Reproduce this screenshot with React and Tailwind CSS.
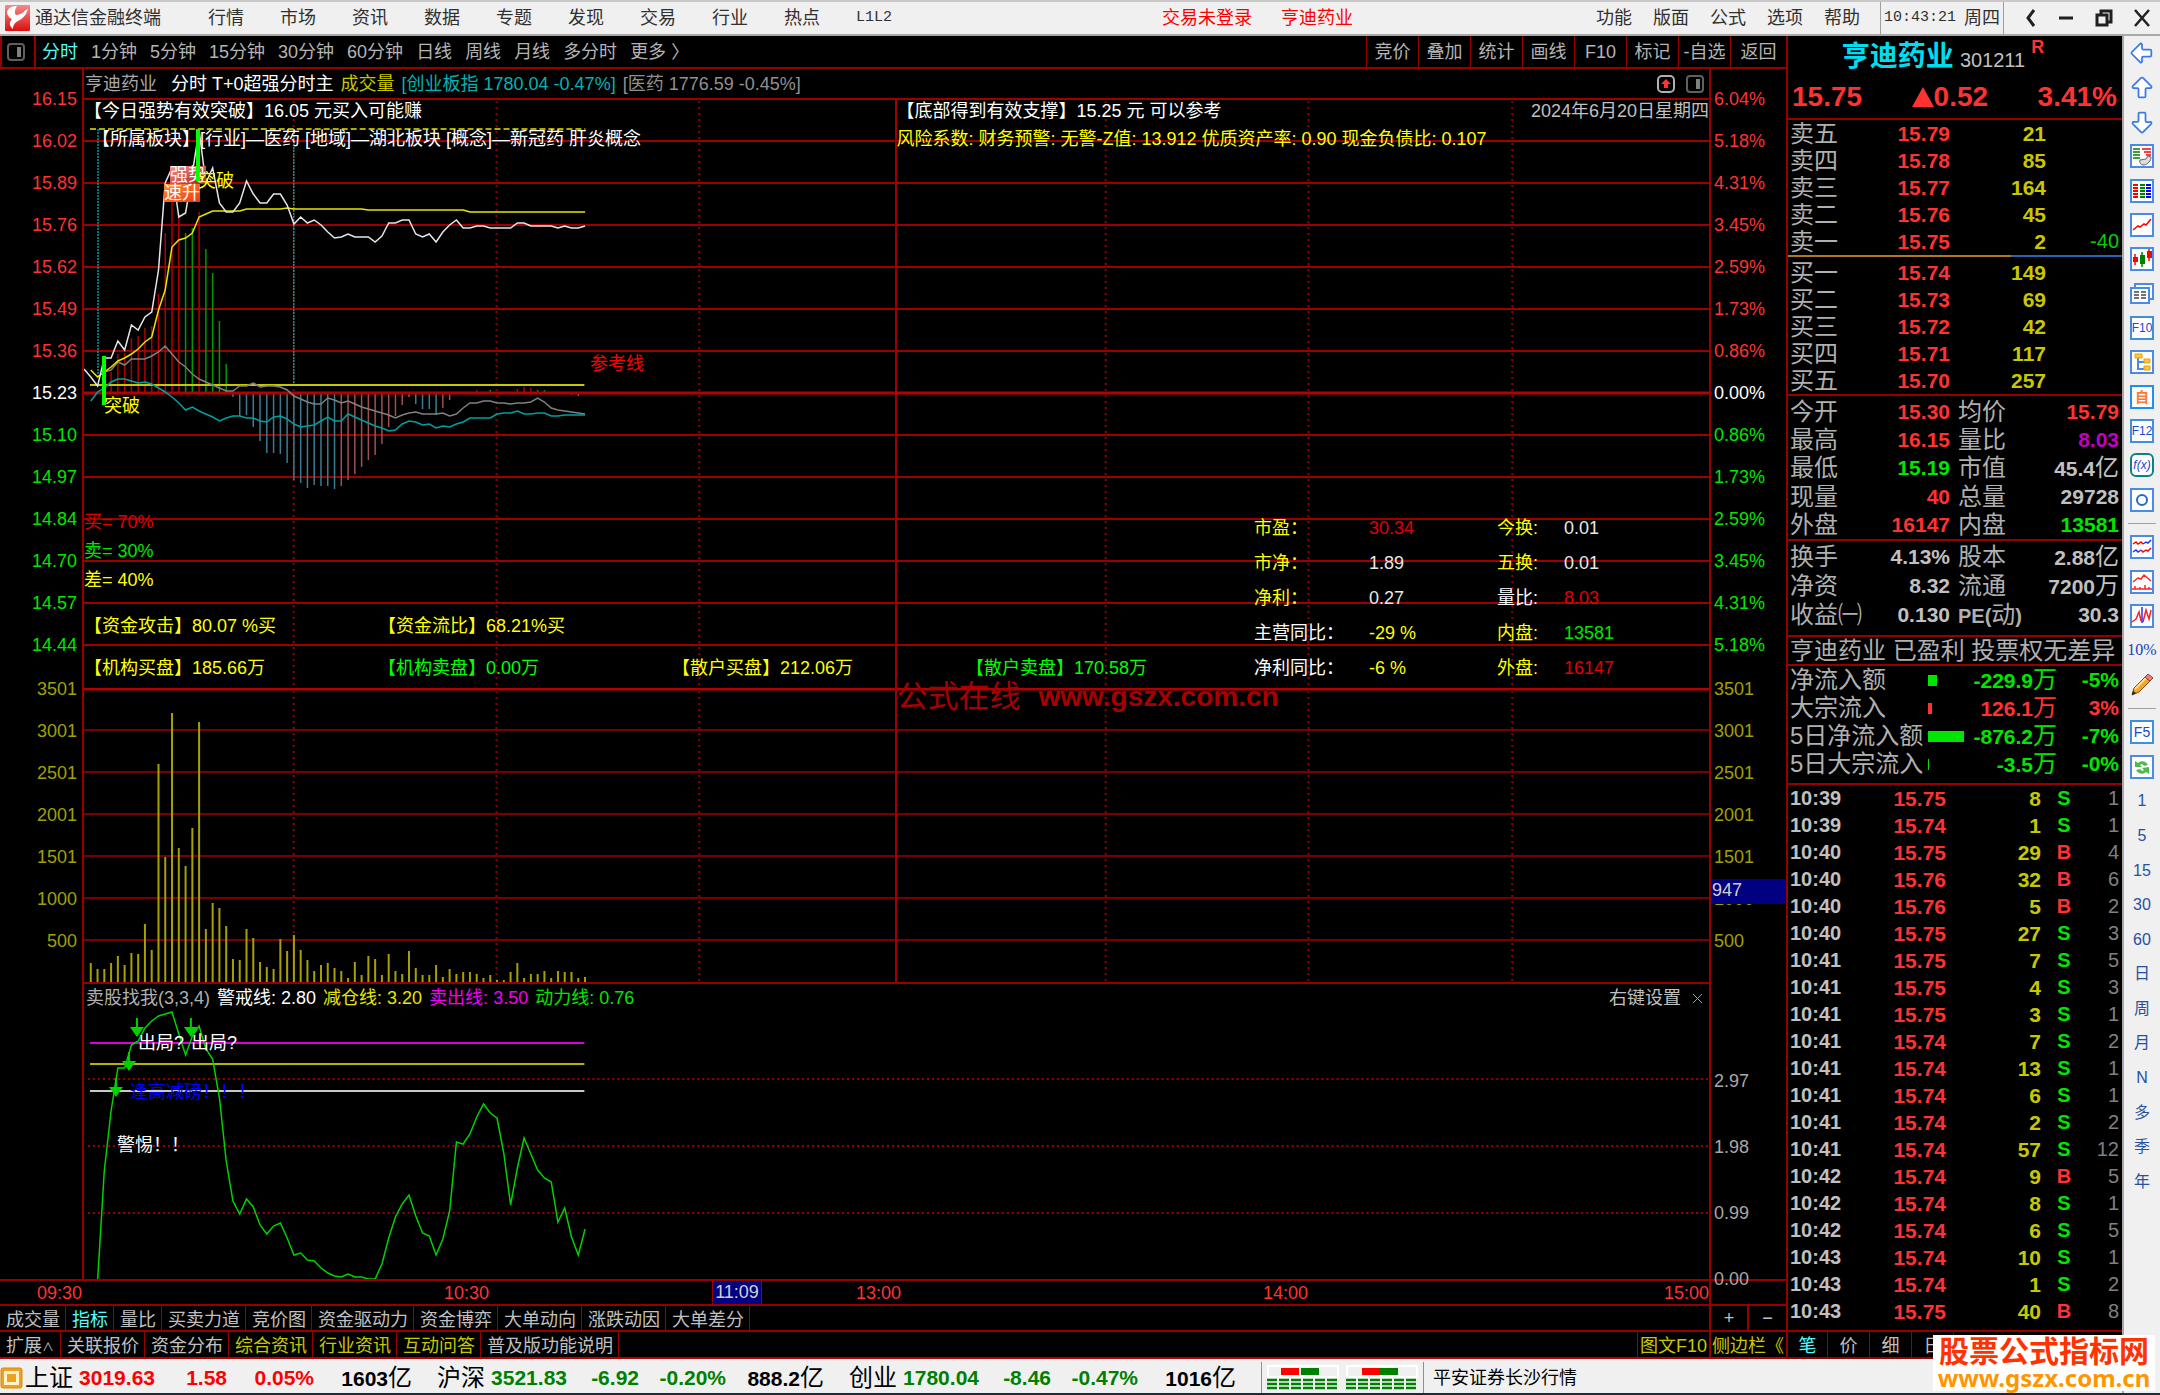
import { ArrowBigDown, ArrowBigLeft, ArrowBigUp } from 'lucide-react';

const MENU = ['行情', '市场', '资讯', '数据', '专题', '发现', '交易', '行业', '热点'];
const MENU_RIGHT = ['功能', '版面', '公式', '选项', '帮助'];
const PERIODS = ['分时', '1分钟', '5分钟', '15分钟', '30分钟', '60分钟', '日线', '周线', '月线', '多分时', '更多 〉'];
const TOOLS = ['竞价', '叠加', '统计', '画线', 'F10', '标记', '-自选', '返回'];
const IND_TABS = ['成交量', '指标', '量比', '买卖力道', '竞价图', '资金驱动力', '资金博弈', '大单动向', '涨跌动因', '大单差分'];
const INFO_TABS = [
  { t: '关联报价' },
  { t: '资金分布' },
  { t: '综合资讯', hot: true },
  { t: '行业资讯', hot: true },
  { t: '互动问答', hot: true },
  { t: '普及版功能说明' },
];

const PRICE_AXIS = ['16.15', '16.02', '15.89', '15.76', '15.62', '15.49', '15.36', '15.23', '15.10', '14.97', '14.84', '14.70', '14.57', '14.44'];
const PCT_AXIS = ['6.04%', '5.18%', '4.31%', '3.45%', '2.59%', '1.73%', '0.86%', '0.00%', '0.86%', '1.73%', '2.59%', '3.45%', '4.31%', '5.18%'];
const VOL_AXIS = ['3501', '3001', '2501', '2001', '1501', '1000', '500'];
const IND_AXIS = ['2.97', '1.98', '0.99', '0.00'];

// one sample per minute, 240 minutes over the chart width
const W = 1627;
const STEP = W / 240;
const toPoints = (ys, start = 0) => ys.map((y, i) => `${((i + start) * STEP).toFixed(1)},${y}`).join(' ');

const PRICE = [271, 279, 288, 260, 260, 243, 252, 227, 232, 219, 214, 172, 85, 70, 119, 115, 75, 32, 85, 70, 105, 114, 114, 105, 83, 96, 105, 105, 96, 96, 107, 126, 119, 125, 122, 127, 134, 140, 139, 136, 139, 139, 139, 144, 138, 125, 125, 122, 122, 136, 139, 136, 144, 134, 127, 122, 130, 130, 128, 128, 130, 130, 130, 130, 125, 125, 128, 128, 128, 128, 130, 128, 130, 130, 128];
const AVG = [272, 279, 274, 269, 263, 260, 256, 251, 244, 239, 212, 192, 149, 142, 140, 135, 119, 116, 113, 113, 113, 113, 113, 111, 111, 111, 111, 111, 111, 110, 111, 111, 111, 111, 111, 111, 111, 111, 111, 111, 111, 112, 112, 112, 112, 112, 112, 112, 112, 112, 112, 112, 112, 112, 112, 112, 114, 114, 114, 114, 114, 114, 114, 114, 114, 114, 114, 114, 114, 114, 114, 114, 114, 114];
const GRAY = [274, 272, 264, 267, 261, 261, 261, 258, 254, 248, 256, 264, 269, 276, 281, 284, 287, 290, 293, 293, 288, 288, 285, 289, 288, 288, 289, 292, 298, 301, 304, 306, 306, 300, 302, 305, 303, 306, 309, 311, 313, 315, 317, 320, 317, 315, 314, 316, 316, 316, 315, 318, 316, 310, 305, 305, 303, 303, 305, 305, 306, 305, 305, 304, 300, 304, 310, 312, 313, 314, 315, 316];
const CYAN = [303, 294, 290, 284, 281, 281, 283, 285, 284, 286, 290, 294, 299, 305, 312, 309, 313, 316, 319, 323, 320, 318, 318, 320, 320, 323, 324, 319, 318, 321, 326, 329, 328, 327, 323, 319, 323, 323, 316, 319, 322, 325, 328, 330, 333, 332, 326, 323, 324, 327, 326, 330, 328, 329, 326, 324, 320, 320, 320, 320, 316, 315, 315, 313, 316, 316, 315, 315, 318, 318, 317, 317, 317, 317];

const R = '#b40000';
const G = '#009a00';
const T = '#3c7c90';
const P = '#a05050';
const MACD = [
  [4, 274, R], [5, 256, R], [6, 255, R], [7, 240, R], [8, 238, R], [9, 230, R], [10, 228, R], [11, 196, R], [12, 135, R], [13, 104, R], [14, 115, R],
  [15, 135, G], [16, 130, G], [17, 114, R], [18, 151, G], [19, 175, G], [20, 223, G], [21, 266, G],
  [22, 299, T], [23, 318, T], [24, 317, T], [25, 329, T], [26, 343, T], [27, 355, T], [28, 355, T], [29, 356, T], [30, 365, T], [31, 382, T], [32, 385, T], [33, 390, T], [34, 387, T], [35, 388, T], [36, 388, T], [37, 391, T],
  [38, 388, P], [39, 382, P], [40, 376, P], [41, 369, P], [42, 362, P], [43, 357, P], [44, 346, P], [45, 329, P], [46, 318, P], [47, 307, P], [48, 299, P],
  [49, 306, T], [50, 311, T], [51, 311, T], [52, 317, T], [53, 310, P], [54, 302, P],
  [58, 292, R], [60, 292, G], [64, 291, R], [65, 289, R], [66, 290, R], [67, 292, G], [68, 292, G], [72, 297, T], [73, 298, T],
];

const VOLUME = [275, 281, 281, 275, 268, 277, 265, 266, 236, 262, 76, 169, 25, 160, 178, 140, 34, 241, 215, 220, 238, 271, 272, 241, 250, 274, 279, 281, 251, 263, 247, 262, 272, 283, 277, 275, 280, 283, 290, 274, 287, 268, 271, 287, 266, 283, 286, 263, 280, 287, 287, 277, 289, 281, 286, 284, 284, 286, 290, 287, 292, 292, 284, 275, 290, 286, 286, 283, 290, 283, 284, 284, 290, 289];

const POWER = [297, 187, 127, 84, 84, 61, 57, 44, 37, 32, 30, 28, 50, 71, 52, 42, 65, 75, 114, 177, 217, 230, 215, 223, 241, 250, 242, 239, 254, 271, 269, 276, 277, 284, 289, 292, 293, 290, 293, 293, 295, 295, 280, 254, 233, 220, 211, 232, 249, 252, 271, 255, 227, 158, 160, 150, 133, 120, 129, 134, 169, 221, 184, 154, 170, 186, 194, 198, 238, 224, 253, 271, 245];
const ARROWS = [[53, 53], [107, 53], [45, 87], [32, 113]];

const ASKS = [['卖五', '15.79', '21'], ['卖四', '15.78', '85'], ['卖三', '15.77', '164'], ['卖二', '15.76', '45'], ['卖一', '15.75', '2', '-40']];
const BIDS = [['买一', '15.74', '149'], ['买二', '15.73', '69'], ['买三', '15.72', '42'], ['买四', '15.71', '117'], ['买五', '15.70', '257']];

const RED = 'text-[#ff3232]';
const GREEN = 'text-[#00e600]';
const GRAY_T = 'text-[#c0c0c0]';
const STATS_A = [
  ['今开', '15.30', RED, '均价', '15.79', '', RED],
  ['最高', '16.15', RED, '量比', '8.03', '', 'text-[#c000c0]'],
  ['最低', '15.19', GREEN, '市值', '45.4', '亿', GRAY_T],
  ['现量', '40', RED, '总量', '29728', '', GRAY_T],
  ['外盘', '16147', RED, '内盘', '13581', '', GREEN],
];
const STATS_B = [
  ['换手', '4.13%', GRAY_T, '股本', '2.88', '亿', GRAY_T],
  ['净资', '8.32', GRAY_T, '流通', '7200', '万', GRAY_T],
  ['收益㈠', '0.130', GRAY_T, 'PE(动)', '30.3', '', GRAY_T],
];
const FLOWS = [
  { l: '净流入额', v: '-229.9', p: '-5%', w: 9, c: GREEN },
  { l: '大宗流入', v: '126.1', p: '3%', w: 4, c: RED },
  { l: '5日净流入额', v: '-876.2', p: '-7%', w: 36, c: GREEN },
  { l: '5日大宗流入', v: '-3.5', p: '-0%', w: 1, c: GREEN },
];
const TICKS = [
  ['10:39', '15.75', 8, 'S', 1], ['10:39', '15.74', 1, 'S', 1], ['10:40', '15.75', 29, 'B', 4], ['10:40', '15.76', 32, 'B', 6],
  ['10:40', '15.76', 5, 'B', 2], ['10:40', '15.75', 27, 'S', 3], ['10:41', '15.75', 7, 'S', 5], ['10:41', '15.75', 4, 'S', 3],
  ['10:41', '15.75', 3, 'S', 1], ['10:41', '15.74', 7, 'S', 2], ['10:41', '15.74', 13, 'S', 1], ['10:41', '15.74', 6, 'S', 1],
  ['10:41', '15.74', 2, 'S', 2], ['10:41', '15.74', 57, 'S', 12], ['10:42', '15.74', 9, 'B', 5], ['10:42', '15.74', 8, 'S', 1],
  ['10:42', '15.74', 6, 'S', 5], ['10:43', '15.74', 10, 'S', 1], ['10:43', '15.74', 1, 'S', 2], ['10:43', '15.75', 40, 'B', 8],
];

const FUNDAMENTALS = [
  ['市盈：', 'text-[#ff0]', '30.34', 'text-[#e00000]', '今换:', 'text-[#ff0]', '0.01', 'text-[#e8e8e8]'],
  ['市净：', 'text-[#ff0]', '1.89', 'text-[#e8e8e8]', '五换:', 'text-[#ff0]', '0.01', 'text-[#e8e8e8]'],
  ['净利：', 'text-[#ff0]', '0.27', 'text-[#e8e8e8]', '量比:', 'text-white', '8.03', 'text-[#e00000]'],
  ['主营同比：', 'text-white', '-29 %', 'text-[#ff0]', '内盘:', 'text-[#ff0]', '13581', 'text-[#00e600]'],
  ['净利同比：', 'text-white', '-6 %', 'text-[#ff0]', '外盘:', 'text-[#ff0]', '16147', 'text-[#e00000]'],
];

const INDEXES = [
  { n: '上证', v: '3019.63', d: '1.58', p: '0.05%', a: '1603', c: 'text-[#ff0000]' },
  { n: '沪深', v: '3521.83', d: '-6.92', p: '-0.20%', a: '888.2', c: 'text-[#008000]' },
  { n: '创业', v: '1780.04', d: '-8.46', p: '-0.47%', a: '1016', c: 'text-[#008000]' },
];

function TopBar() {
  return (
    <header className="flex h-9 items-center border-t-2 border-b-2 border-t-[#c8c8c8] border-b-[#a8a8a8] bg-[#f0f0f0] text-lg text-[#303030]">
      <svg className="ml-[5px] h-[26px] w-[25px]" viewBox="0 0 25 26">
        <defs>
          <linearGradient id="logo" x1="0" y1="0" x2="0" y2="1">
            <stop offset="0" stopColor="#f58a8a" />
            <stop offset="1" stopColor="#dc0f0f" />
          </linearGradient>
        </defs>
        <rect width="25" height="26" rx="1" fill="url(#logo)" />
        <path d="M2 7C3 3 7 1 12 1c-2 3-3 7-1 9 5 0 9-4 12-7-1 6-5 11-10 13-4 2-5 5-5 8-4-3-4-7-1-10-3-1-5-4-5-7z" fill="#fff" />
      </svg>
      <h1 className="ml-[5px] w-[126px] whitespace-nowrap">通达信金融终端</h1>
      <nav className="ml-[47px] flex items-center gap-9">
        {MENU.map((m) => (
          <button key={m} type="button">{m}</button>
        ))}
        <button type="button" className="font-['Liberation_Mono',monospace] text-[15px]">L1L2</button>
      </nav>
      <div className="ml-auto flex gap-[29px] text-[#ff0000]">
        <button type="button">交易未登录</button>
        <button type="button">亨迪药业</button>
      </div>
      <nav className="ml-[243px] flex gap-[21px]">
        {MENU_RIGHT.map((m) => (
          <button key={m} type="button">{m}</button>
        ))}
      </nav>
      <div className="ml-5 flex h-full items-center gap-2 border-x border-[#a0a0a0] px-[3px]">
        <time className="font-['Liberation_Mono',monospace] text-[15px]">10:43:21</time>
        <span>周四</span>
      </div>
      <div className="flex w-[156px] items-center justify-between pr-[10px] pl-5">
        <button type="button" aria-label="后退">
          <svg className="h-5 w-[14px]" viewBox="0 0 14 20"><path d="M10 2L4 10l6 8" fill="none" stroke="#202020" strokeWidth="3" /></svg>
        </button>
        <button type="button" aria-label="最小化">
          <svg className="h-5 w-[14px]" viewBox="0 0 14 20"><path d="M0 10h14" stroke="#202020" strokeWidth="3" /></svg>
        </button>
        <button type="button" aria-label="还原">
          <svg className="h-5 w-[18px]" viewBox="0 0 18 20"><path d="M2 7h10v10H2zM6 7V3h10v11h-4" fill="none" stroke="#202020" strokeWidth="3" /></svg>
        </button>
        <button type="button" aria-label="关闭">
          <svg className="h-5 w-4" viewBox="0 0 16 20"><path d="M1 2l14 16M15 2L1 18" stroke="#202020" strokeWidth="2.5" /></svg>
        </button>
      </div>
    </header>
  );
}

function PanelIcon({ className }) {
  return (
    <svg className={className} viewBox="0 0 18 18">
      <rect x="1" y="1" width="16" height="16" rx="3" fill="none" stroke="#606060" strokeWidth="2" />
      <rect x="10" y="4" width="4" height="10" fill="#808080" />
    </svg>
  );
}

function PeriodBar() {
  return (
    <div className="flex h-[33px] border-b-2 border-[#960000] text-lg text-[#b4b4b4]">
      <button type="button" aria-label="布局" className="flex w-9 items-center justify-center border-r-2 border-l-2 border-[#960000] pr-1">
        <PanelIcon className="h-[18px] w-[18px]" />
      </button>
      <nav className="ml-[6px] flex items-center gap-[13px]">
        {PERIODS.map((p, i) => (
          <button key={p} type="button" className={i === 0 ? 'text-[#54fcfc]' : ''}>{p}</button>
        ))}
      </nav>
      <div className="ml-auto flex">
        {TOOLS.map((t) => (
          <button key={t} type="button" className="w-[52px] border-l border-[#960000] text-center last:w-[56px]">{t}</button>
        ))}
      </div>
    </div>
  );
}

const axisColor = (i) => {
  if (i < 7) return 'text-[#ff3232]';
  return i === 7 ? 'text-white' : 'text-[#00e600]';
};

function Axis({ labels, side }) {
  return (
    <div className={side === 'left' ? 'w-[82px] shrink-0 pt-[9px] pr-[5px] text-right' : 'relative w-[77px] shrink-0 border-l-2 border-[#960000] pt-[9px] pl-[3px]'}>
      {labels.map((l, i) => (
        <div key={i} className={`h-[42px] leading-[42px] ${axisColor(i)}`}>{l}</div>
      ))}
      <div className="pt-[2px] text-[#a0a000]">
        {VOL_AXIS.map((l) => (
          <div key={l} className="h-[42px] leading-[42px]">{l}</div>
        ))}
      </div>
      {side === 'right' && (
        <>
          <div className="h-0 pt-[86px] text-[#a8a8a8]">
            {IND_AXIS.map((l) => (
              <div key={l} className="h-[66px] leading-[66px]">{l}</div>
            ))}
          </div>
          <div className="absolute inset-x-0 top-[810px] h-[25px] bg-[#000080] pl-[1px] leading-[22px] text-[#d0d0d0]">947</div>
        </>
      )}
    </div>
  );
}

function VerticalGrid({ height }) {
  return (
    <g stroke="#a00000" strokeWidth="2">
      {[210, 413, 616, 1023, 1226, 1430].map((x) => (
        <line key={x} x1={x} x2={x} y1="3" y2={height} strokeDasharray="2 4" stroke="#8c0000" />
      ))}
      <line x1="813" x2="813" y1="0" y2={height} />
    </g>
  );
}

function PricePane() {
  return (
    <div className="relative h-[590px] whitespace-nowrap">
      <svg className="block h-full w-full" viewBox={`0 0 ${W} 590`} preserveAspectRatio="none">
        <g stroke="#9c0000" strokeWidth="2">
          {PRICE_AXIS.map((p, i) => (
            <line key={p} x1="0" x2={W} y1={i * 42 + 1} y2={i * 42 + 1} />
          ))}
        </g>
        <VerticalGrid height={590} />
        {MACD.map(([i, y, c]) => (
          <line key={i} x1={i * STEP} x2={i * STEP} y1="294" y2={y} stroke={c} strokeWidth="1.5" />
        ))}
        <line x1="0" x2={W} y1="295" y2="295" stroke="#b40000" strokeWidth="3" />
        <line x1="6" x2="502" y1="31" y2="31" stroke="#e6e600" strokeDasharray="6 3" strokeWidth="1.5" />
        <path d="M14 31V279M210 31V288" stroke="#009a9a" strokeDasharray="2 1" strokeWidth="1.5" />
        <line x1="6" x2="501" y1="287" y2="287" stroke="#c8c800" strokeWidth="2" />
        <g fill="none" strokeWidth="1.5">
          <polyline points={toPoints(GRAY, 3)} stroke="#808080" />
          <polyline points={toPoints(CYAN, 1)} stroke="#00a0a0" />
          <polyline points={toPoints(AVG, 1)} stroke="#e6e600" />
          <polyline points={toPoints(PRICE)} stroke="#e6e6e6" />
        </g>
      </svg>

      <div className="absolute top-0 left-0 leading-[27px] text-white">【今日强势有效突破】16.05 元买入可能赚</div>
      <div className="absolute top-7 left-2 leading-[27px] text-white">【所属板块】[行业]—医药 [地域]—湖北板块 [概念]—新冠药 肝炎概念</div>
      <div className="absolute top-0 left-1/2 leading-[27px] text-white">【底部得到有效支撑】15.25 元 可以参考</div>
      <div className="absolute top-7 left-1/2 leading-[27px] text-[#ff0]">风险系数: 财务预警: 无警-Z值: 13.912 优质资产率: 0.90 现金负债比: 0.107</div>
      <div className="absolute top-0 right-0 leading-[27px] text-[#c0c0c0]">2024年6月20日星期四</div>

      <span className="absolute top-[68px] left-[86px] h-[18px] bg-gradient-to-br from-[#ff9090] to-[#a01818] leading-[18px] text-white">强势</span>
      <span className="absolute top-[86px] left-[80px] h-[18px] bg-gradient-to-br from-[#ff8a30] to-[#f03010] leading-[18px] text-white">速升</span>
      <span className="absolute top-[31px] left-[112px] h-[52px] w-1 bg-[#00ff00]" />
      <span className="absolute top-[258px] left-[18px] h-[49px] w-1 bg-[#00ff00]" />
      <span className="absolute top-[70px] left-[114px] leading-[27px] text-[#ff0]">突破</span>
      <span className="absolute top-[295px] left-[20px] leading-[27px] text-[#ff0]">突破</span>
      <span className="absolute top-[253px] left-[506px] leading-[27px] text-[#ff0000]">参考线</span>

      <div className="absolute top-[410px] left-0 leading-[29px]">
        <div className="text-[#e00000]">买= 70%</div>
        <div className="text-[#00e600]">卖= 30%</div>
        <div className="text-[#ff0]">差= 40%</div>
      </div>
      <div className="absolute top-[507px] left-0 grid grid-cols-[294px_294px_294px_294px] leading-[42px] text-[#ff0]">
        <span>【资金攻击】80.07 %买</span>
        <span className="col-span-3">【资金流比】68.21%买</span>
        <span>【机构买盘】185.66万</span>
        <span className="text-[#00ff00]">【机构卖盘】0.00万</span>
        <span>【散户买盘】212.06万</span>
        <span className="text-[#00ff00]">【散户卖盘】170.58万</span>
      </div>

      <table className="absolute top-[412px] right-[75px] border-collapse text-left">
        <tbody>
          {FUNDAMENTALS.map(([l1, c1, v1, d1, l2, c2, v2, d2]) => (
            <tr key={l1} className="h-[35px]">
              <th scope="row" className={`w-[115px] p-0 font-normal ${c1}`}>{l1}</th>
              <td className={`w-[128px] p-0 ${d1}`}>{v1}</td>
              <th scope="row" className={`w-[67px] p-0 font-normal ${c2}`}>{l2}</th>
              <td className={`w-[70px] p-0 ${d2}`}>{v2}</td>
            </tr>
          ))}
        </tbody>
      </table>
    </div>
  );
}

function VolumePane() {
  return (
    <div className="relative h-[296px] border-b-2 border-[#960000]">
      <svg className="block h-full w-full" viewBox={`0 0 ${W} 294`} preserveAspectRatio="none">
        <line x1="0" x2={W} y1="1" y2="1" stroke="#b40000" strokeWidth="3" />
        <g stroke="#780000" strokeWidth="2">
          {[42, 84, 126, 168, 210, 252].map((y) => (
            <line key={y} x1="0" x2={W} y1={y} y2={y} />
          ))}
        </g>
        <VerticalGrid height={294} />
        {VOLUME.map((y, i) => (
          <line key={i} x1={(i + 1) * STEP} x2={(i + 1) * STEP} y1="294" y2={y} stroke="#a8a000" strokeWidth="2" />
        ))}
      </svg>
      <div className="absolute -top-[5px] left-1/2 flex gap-[18px] whitespace-nowrap text-[#a80000]">
        <span className="text-[31px] leading-7">公式在线</span>
        <span className="text-[28px] leading-7 font-bold">www.gszx.com.cn</span>
      </div>
    </div>
  );
}

function IndicatorPane() {
  return (
    <div className="relative h-[295px] whitespace-nowrap">
      <svg className="block h-full w-full" viewBox={`0 0 ${W} 295`} preserveAspectRatio="none">
        <g stroke="#960000" strokeWidth="2" strokeDasharray="2 3">
          <path d={`M4 95H${W}M4 162H${W}M4 229H${W}`} />
        </g>
        <line x1="6" x2="501" y1="59" y2="59" stroke="#d800d8" strokeWidth="2" />
        <line x1="6" x2="501" y1="80" y2="80" stroke="#b4b400" strokeWidth="2" />
        <line x1="6" x2="501" y1="107" y2="107" stroke="#c8c8c8" strokeWidth="2" />
        <polyline points={toPoints(POWER, 2)} fill="none" stroke="#00d200" strokeWidth="1.5" />
        {ARROWS.map(([x, y]) => (
          <path key={`${x}-${y}`} d={`M${x - 1} ${y - 19}h2v9h6l-7 10l-7 -10h6z`} fill="#00d200" />
        ))}
      </svg>
      <div className="absolute top-0 left-[2px] flex gap-[7px] leading-7">
        <span className="text-[#b0b0b0]">卖股找我(3,3,4)</span>
        <span className="text-white">警戒线: 2.80</span>
        <span className="text-[#e6e600]">减仓线: 3.20</span>
        <span className="text-[#f000f0]">卖出线: 3.50</span>
        <span className="text-[#00e600]">动力线: 0.76</span>
      </div>
      <div className="absolute top-0 right-[6px] flex items-center gap-[11px] leading-7 text-[#c0c0c0]">
        <button type="button">右键设置</button>
        <button type="button" aria-label="关闭指标">
          <svg className="h-[11px] w-[11px]" viewBox="0 0 11 11"><path d="M1 1l9 9M10 1l-9 9" stroke="#a0a0a0" /></svg>
        </button>
      </div>
      <span className="absolute top-[45px] left-[54px] leading-7 text-white">出局?</span>
      <span className="absolute top-[45px] left-[107px] leading-7 text-white">出局?</span>
      <span className="absolute top-[94px] left-[46px] leading-7 text-[#0000ff]">逢高减磅！！！</span>
      <span className="absolute top-[147px] left-[33px] leading-7 text-white">警惕！！</span>
    </div>
  );
}

function ChartArea() {
  return (
    <div className="flex h-[1210px]">
      <Axis labels={PRICE_AXIS} side="left" />
      <div className="min-w-0 flex-1 border-l-2 border-[#960000]">
        <div className="flex h-[29px] items-center gap-[7px] whitespace-nowrap">
          <h2 className="mr-[7px] ml-[1px] text-[#a8a8a8]">亨迪药业</h2>
          <span className="text-white">分时 T+0超强分时主</span>
          <span className="text-[#c8c800]">成交量</span>
          <span className="text-[#00b4b4]">[创业板指 1780.04 -0.47%]</span>
          <span className="text-[#909090]">[医药 1776.59 -0.45%]</span>
          <button type="button" aria-label="置顶" className="ml-auto">
            <svg className="h-[18px] w-[18px]" viewBox="0 0 18 18">
              <rect x="1" y="1" width="16" height="16" rx="4" fill="none" stroke="#b0b0b0" strokeWidth="2" />
              <path d="M9 4l5 5h-3v4H7V9H4z" fill="#ff3232" />
            </svg>
          </button>
          <button type="button" aria-label="侧栏" className="mr-[5px] ml-1">
            <PanelIcon className="h-[18px] w-[18px]" />
          </button>
        </div>
        <PricePane />
        <VolumePane />
        <IndicatorPane />
      </div>
      <Axis labels={PCT_AXIS} side="right" />
    </div>
  );
}

function TimeAxis() {
  return (
    <div className="flex h-[27px] border-y-2 border-[#960000] leading-6 text-[#ff3232]">
      <div className="w-[82px] text-right">09:30</div>
      <div className="relative grid flex-1 grid-cols-[407fr_412fr_407fr_401fr] text-right">
        <span>10:30</span>
        <span>13:00</span>
        <span>14:00</span>
        <span>15:00</span>
        <div className="absolute inset-y-0 left-[630px] w-[50px] border-x border-[#960000] bg-[#000080] text-center leading-[22px] text-[#d0d0d0]">11:09</div>
      </div>
      <div className="w-[77px] border-l-2 border-[#960000]" />
    </div>
  );
}

function BottomTabs() {
  return (
    <div className="leading-5 text-[#c0c0c0]">
      <div className="flex h-[26px] border-b-2 border-[#960000]">
        {IND_TABS.map((t, i) => (
          <button key={t} type="button" className={`border-r border-[#960000] pt-[3px] pr-[5px] pl-[6px] ${i === 1 ? 'text-[#54fcfc]' : ''}`}>{t}</button>
        ))}
        <button type="button" aria-label="放大" className="ml-auto w-[38px] border-l-2 border-[#960000]">+</button>
        <button type="button" aria-label="缩小" className="w-[39px] border-l-2 border-[#960000]">−</button>
      </div>
      <div className="flex h-[27px] border-b-2 border-[#b40000]">
        <button type="button" className="w-[61px] border-r border-[#960000] pt-[3px] whitespace-nowrap">扩展<span className="text-xs">∧</span></button>
        {INFO_TABS.map(({ t, hot }) => (
          <button key={t} type="button" className={`border-r border-[#960000] pt-[3px] pr-[5px] pl-[6px] ${hot ? 'text-[#c8c800]' : ''}`}>{t}</button>
        ))}
        <button type="button" className="ml-auto w-[72px] border-l border-[#960000] pt-[3px] text-center text-[#c8c800]">图文F10</button>
        <button type="button" className="w-[77px] overflow-hidden border-l-2 border-[#960000] pt-[3px] pl-[1px] text-left whitespace-nowrap text-[#c8c800]">侧边栏《</button>
      </div>
    </div>
  );
}

function BookRows({ rows }) {
  return (
    <table className="w-full table-fixed border-collapse text-right text-[21px] leading-[27px] font-bold">
      <tbody>
        {rows.map(([l, p, v, d]) => (
          <tr key={l} className="h-[27px]">
            <th scope="row" className="w-[70px] p-0 pl-[2px] text-left text-2xl leading-[27px] font-normal text-[#b0b0b0]">{l}</th>
            <td className="w-[92px] p-0 text-[#ff3232]">{p}</td>
            <td className="w-24 p-0 text-[#c8c800]">{v}</td>
            <td className="p-0 pr-[3px] text-xl leading-[27px] font-normal text-[#00d200]">{d}</td>
          </tr>
        ))}
      </tbody>
    </table>
  );
}

function StatRows({ rows }) {
  return (
    <dl className="grid grid-cols-[72px_88px_1fr_auto] pr-[3px] pl-[2px] text-right text-[21px] leading-7 font-bold whitespace-nowrap">
      {rows.map(([l1, v1, c1, l2, v2, u2, c2]) => (
        <div key={l1} className="contents">
          <dt className="text-left text-2xl leading-7 font-normal text-[#b0b0b0]">{l1}</dt>
          <dd className={c1}>{v1}</dd>
          <dt className="pl-2 text-left text-2xl leading-7 font-normal text-[#b0b0b0]">
            {l2.startsWith('PE') ? <><b className="text-xl">PE(</b>动<b className="text-xl">)</b></> : l2}
          </dt>
          <dd className={c2}>
            {v2}
            {u2 && <span className="text-2xl leading-7 font-normal">{u2}</span>}
          </dd>
        </div>
      ))}
    </dl>
  );
}

function QuotePanel() {
  return (
    <aside className="flex w-[336px] shrink-0 flex-col border-l-2 border-[#960000]">
      <div className="flex h-[39px] items-end justify-center gap-[6px] pr-6 leading-none">
        <h2 className="text-[28px] leading-9 font-bold text-[#00dcf0]">亨迪药业</h2>
        <span className="text-xl leading-[30px] text-[#c0c0c0]">301211</span>
        <span className="self-center text-lg leading-6 font-bold text-[#ff3232]">
          <sup className="text-lg leading-none">R</sup>
        </span>
      </div>
      <div className="flex h-[45px] items-center justify-between border-b-2 border-[#960000] pr-[5px] pl-1 text-[28px] font-bold text-[#ff3232]">
        <span>15.75</span>
        <span className="flex items-center">
          <svg className="h-5 w-[22px]" viewBox="0 0 22 20"><path d="M11 0l11 20H0z" fill="#ff3232" /></svg>
          0.52
        </span>
        <span>3.41%</span>
      </div>
      <BookRows rows={ASKS} />
      <div className="flex h-[2px]">
        <div className="w-2/3 bg-[#b07820]" />
        <div className="flex-1 bg-[#2864b4]" />
      </div>
      <div className="border-b-2 border-[#960000] pt-[2px]">
        <BookRows rows={BIDS} />
      </div>
      <div className="border-b-2 border-[#960000] pt-[2px]">
        <StatRows rows={STATS_A} />
      </div>
      <div className="border-b-2 border-[#960000] pt-[2px] pb-[5px]">
        <StatRows rows={STATS_B} />
      </div>
      <div className="h-[29px] border-b-2 border-[#960000] pl-[2px] text-2xl leading-7 whitespace-nowrap text-[#b0b0b0]">亨迪药业 已盈利 投票权无差异</div>
      <div className="border-b-2 border-[#960000] pb-[5px] text-[21px] leading-7 font-bold">
        {FLOWS.map((f) => (
          <div key={f.l} className={`flex h-7 items-center pr-[3px] pl-[2px] whitespace-nowrap ${f.c}`}>
            <span className="w-[138px] text-2xl leading-7 font-normal text-[#b0b0b0]">{f.l}</span>
            <span className="w-[36px]">
              <span className="block h-[11px] bg-current" style={{ width: f.w }} />
            </span>
            <span className="flex-1 text-right">
              {f.v}
              <span className="text-2xl leading-7 font-normal">万</span>
            </span>
            <span className="w-[62px] text-right">{f.p}</span>
          </div>
        ))}
      </div>
      <table className="w-full table-fixed border-collapse text-right text-[21px] leading-[27px] font-bold">
        <tbody>
          {TICKS.map(([t, p, v, s, n], i) => (
            <tr key={i} className="h-[27px]">
              <td className="w-[70px] p-0 pl-[2px] text-left text-xl leading-[27px] text-[#c0c0c0]">{t}</td>
              <td className="w-[88px] p-0 text-[#ff3232]">{p}</td>
              <td className="w-[95px] p-0 text-[#c8c800]">{v}</td>
              <td className={`w-[46px] p-0 text-center text-xl leading-[27px] ${s === 'S' ? 'text-[#00e600]' : 'text-[#ff3232]'}`}>{s}</td>
              <td className="p-0 pr-[3px] text-xl leading-[27px] font-normal text-[#808080]">{n}</td>
            </tr>
          ))}
        </tbody>
      </table>
      <div className="mt-auto flex h-[29px] border-t-2 border-b-2 border-[#960000] leading-5 text-[#c0c0c0]">
        {['笔', '价', '细', '日'].map((t, i) => (
          <button key={t} type="button" className={`w-[42px] border-r border-[#960000] pt-[3px] first:w-[40px] ${i === 0 ? 'text-[#54fcfc]' : ''}`}>{t}</button>
        ))}
      </div>
    </aside>
  );
}

function StatusBar() {
  return (
    <footer className="flex h-[34px] items-center overflow-hidden bg-[#f0f0f0] pt-[3px] text-[21px] font-bold whitespace-nowrap text-black">
      <svg className="h-[22px] w-[25px] pr-[2px]" viewBox="0 0 23 22">
        <rect x="1" y="1" width="21" height="20" rx="2" fill="#f0a020" stroke="#d88a10" />
        <rect x="4" y="4" width="15" height="14" fill="#fff2c8" />
        <rect x="7" y="7" width="9" height="8" fill="#f0a020" />
      </svg>
      {INDEXES.map((x) => (
        <div key={x.n} className="flex w-[412px] items-center text-right">
          <span className="w-[54px] text-left text-2xl font-normal">{x.n}</span>
          <span className={`w-[76px] ${x.c}`}>{x.v}</span>
          <span className={`w-[72px] ${x.c}`}>{x.d}</span>
          <span className={`w-[87px] ${x.c}`}>{x.p}</span>
          <span className="w-[98px]">{x.a}<span className="text-2xl leading-none font-normal">亿</span></span>
        </div>
      ))}
      <div className="flex h-full items-center gap-[7px] border-x border-[#909090] px-[5px]">
        {[0, 1].map((k) => (
          <svg key={k} className="h-7 w-[72px]" viewBox="0 0 72 28">
            <rect x="1" y="2" width="70" height="11" fill="none" stroke="#fff" strokeWidth="2" />
            <rect x={k ? 16 : 14} y="4" width="18" height="7" fill="#ff0000" />
            <rect x="34" y="4" width="18" height="7" fill="#008000" />
            <path d="M0 16H72M0 20H72M0 24H72" stroke="#008000" strokeWidth="2.6" strokeDasharray="10 2" />
          </svg>
        ))}
      </div>
      <span className="ml-[9px] text-lg font-normal">平安证券长沙行情</span>
    </footer>
  );
}

function Box({ children, stroke = '#4b8be8', rx = 0 }) {
  return (
    <svg className="h-6 w-6" viewBox="0 0 24 24" fill="none">
      <rect x="1" y="1" width="22" height="22" rx={rx} fill="#fff" stroke={stroke} strokeWidth="2" />
      {children}
    </svg>
  );
}

function BoxText({ children, className = 'border-[#3f8fe0] text-[#2046d2]' }) {
  return <span className={`flex h-6 w-6 items-center justify-center overflow-hidden border-2 bg-white text-xs leading-none ${className}`}>{children}</span>;
}

const arrowProps = { size: 28, fill: '#fff', color: '#3c78e6', strokeWidth: 1.5 };

const SIDE_TOP = [
  ['左', <ArrowBigLeft {...arrowProps} />],
  ['上', <ArrowBigUp {...arrowProps} />],
  ['下', <ArrowBigDown {...arrowProps} />],
  ['盘口', (
    <Box>
      <path d="M3 5h7M3 8h7M3 11h7M3 14h7" stroke="#008000" strokeWidth="1.5" />
      <path d="M12 5h9M14 8h7M16 11h5" stroke="#ff0000" strokeWidth="1.5" />
      <path d="M10 16c-1 3 1 5 4 5 4-1 7-4 7-8l-3-1-2 3z" fill="#ddd" stroke="#666" />
    </Box>
  )],
  ['行情表', (
    <Box>
      <path d="M3 6h5M3 9h5M3 12h5M3 15h5M3 18h5" stroke="#ff0000" strokeWidth="2" />
      <path d="M10 6h5M10 9h5M10 12h5M10 15h5M10 18h5" stroke="#008000" strokeWidth="2" />
      <path d="M16 6h5M16 9h5M16 12h5M16 15h5M16 18h5" stroke="#0000ff" strokeWidth="2" />
    </Box>
  )],
  ['分时图', <Box><path d="M3 17l5-4 2 1 4-3 2 1 5-6" stroke="#ff0000" strokeWidth="1.5" /></Box>],
  ['K线', (
    <Box>
      <path d="M5 7v11M19 2v12" stroke="#ff0000" strokeWidth="1.5" />
      <path d="M12 5v15" stroke="#008000" strokeWidth="1.5" />
      <path d="M3 10h5v5H3zM17 4h5v7h-5z" fill="#ff0000" />
      <path d="M10 8h5v9h-5z" fill="#008000" />
    </Box>
  )],
  ['资讯', (
    <svg className="h-6 w-6" viewBox="0 0 24 24">
      <path d="M5 2h18v15H5z" fill="#fff" stroke="#4b8be8" strokeWidth="2" />
      <path d="M1 6h18v15H1z" fill="#fff" stroke="#4b8be8" strokeWidth="2" />
      <path d="M4 10h5M11 10h5M4 13h5M11 13h5M4 16h5M11 16h5" stroke="#444" strokeWidth="1.5" />
    </svg>
  )],
  ['F10', <BoxText>F10</BoxText>],
  ['板块树', (
    <Box>
      <path d="M8 7v12h6M8 12h6" stroke="#4b8be8" strokeWidth="2" />
      <path d="M5 4h7v4H5zM14 9h6v4h-6zM14 16h6v4h-6z" fill="#ffc840" stroke="#e8a000" />
    </Box>
  )],
  ['自选股', <BoxText className="border-[#2090f0] font-bold text-[#ff7832]"><span className="text-sm leading-none">自</span></BoxText>],
  ['F12', <BoxText>F12</BoxText>],
  ['公式', <BoxText className="rounded-md border-[#108080] text-[#2046d2] italic">f(x)</BoxText>],
  ['周期', <Box><circle cx="12" cy="12" r="5" stroke="#1e6ec8" strokeWidth="2" /></Box>],
];

const SIDE_MID = [
  ['双线', (
    <Box>
      <path d="M3 9l3-2 2 2 3-2 2 2" stroke="#ff0000" strokeWidth="1.5" />
      <path d="M13 9l3-2 2 1 3-3M3 17l3-2 2 2 3-2" stroke="#2030ff" strokeWidth="1.5" />
      <path d="M11 15l2 2 3-2 2 1 3-3" stroke="#ff0000" strokeWidth="1.5" />
    </Box>
  )],
  ['区间', <Box><path d="M3 12l5-4 3 1 3-4 7 6M2 19h20M5 16v3M10 17v2M15 15v4M19 17v2" stroke="#ff2020" strokeWidth="1.5" /></Box>],
  ['叠加线', (
    <Box>
      <path d="M2 18l4-3 3-7 2 9M13 18l3-12 3 9 2-9" stroke="#ff2020" strokeWidth="1.5" />
      <path d="M12 3v16" stroke="#2030ff" strokeWidth="1.5" />
    </Box>
  )],
  ['百分比', <span className="font-['Liberation_Serif',serif] text-base text-[#2040b4]">10%</span>],
  ['画线', (
    <svg className="h-6 w-6" viewBox="0 0 24 24">
      <path d="M2 22l2-7L15 4l5 4L9 19z" fill="#f5a623" stroke="#7a4a10" />
      <path d="M5 16l11-11" stroke="#ffe08a" strokeWidth="2" />
      <path d="M15 4l3-3 5 4-3 3z" fill="#f08080" stroke="#904040" />
      <path d="M2 22l1-4 3 2z" fill="#222" />
    </svg>
  )],
];

const SIDE_LOW = [
  ['F5', <BoxText><span className="text-sm leading-none">F5</span></BoxText>],
  ['刷新', (
    <Box>
      <path d="M5 12V6l3 2c3-3 8-2 10 2l-4 1c-1-2-3-2-4-1l2 2zM19 12v7l-3-2c-3 3-8 2-10-2l4-1c1 2 3 2 4 1l-2-2z" fill="#50b850" />
    </Box>
  )],
  ...['1', '5', '15', '30', '60', '日', '周', '月', 'N', '多', '季', '年'].map((t) => [t, t]),
];

function SideGroup({ items, className }) {
  return (
    <div className={`flex flex-col ${className}`}>
      {items.map(([label, node]) => (
        <button key={label} type="button" aria-label={label} className="flex flex-1 items-center justify-center">{node}</button>
      ))}
    </div>
  );
}

function Sidebar() {
  return (
    <nav className="w-[38px] shrink-0 border-l-2 border-[#a8a8a8] bg-[#f0f0f0] text-base text-[#2850a0]">
      <SideGroup items={SIDE_TOP} className="h-[481px]" />
      <hr className="mx-1 my-[6px] border-[#a0a0a0]" />
      <SideGroup items={SIDE_MID} className="h-[172px]" />
      <hr className="mx-1 my-[6px] border-[#a0a0a0]" />
      <SideGroup items={SIDE_LOW} className="h-[484px]" />
    </nav>
  );
}

export default function App() {
  return (
    <div className="relative flex min-h-screen flex-col overflow-hidden bg-black font-['Liberation_Sans','Noto_Sans_CJK_SC',sans-serif] text-lg leading-none">
      <TopBar />
      <div className="flex flex-1 border-b-2 border-[#1b2b3c]">
        <div className="flex min-w-0 flex-1 flex-col">
          <div className="flex">
            <main className="min-w-0 flex-1">
              <PeriodBar />
              <ChartArea />
              <TimeAxis />
              <BottomTabs />
            </main>
            <QuotePanel />
          </div>
          <StatusBar />
        </div>
        <Sidebar />
      </div>
      <a href="#site" className="absolute right-[5px] bottom-[4px] flex h-14 w-[222px] flex-col items-center bg-white pt-[1px] font-bold whitespace-nowrap">
        <span className="text-[30px] leading-8 text-[#ff3200]">股票公式指标网</span>
        <span className="font-['Noto_Sans',sans-serif] text-2xl leading-[20px] text-[#ff9600]">www.gszx.com.cn</span>
      </a>
    </div>
  );
}
